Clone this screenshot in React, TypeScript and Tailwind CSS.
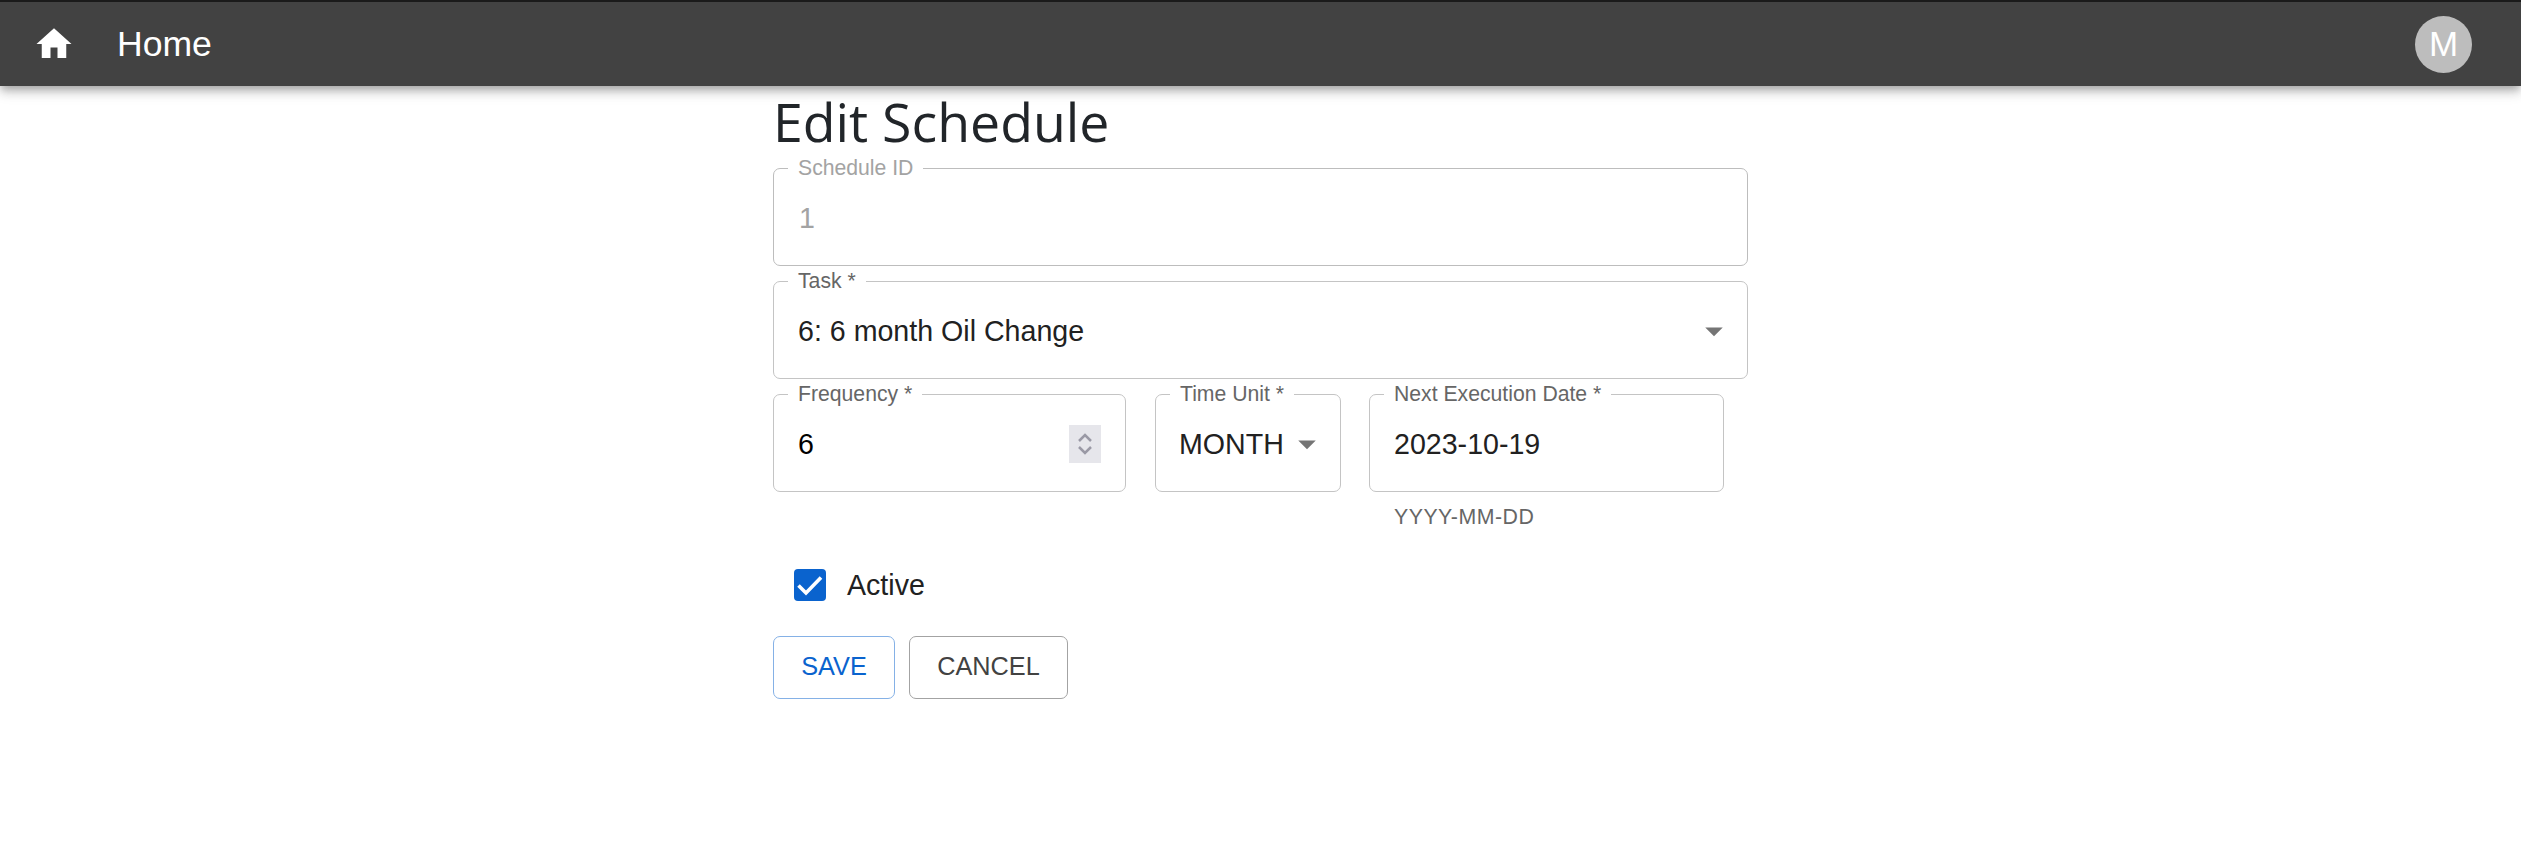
import React from "react";

function Notched({ label, className, disabled, children }: { label: string; className: string; disabled?: boolean; children: React.ReactNode }) {
  return (
    <div className={`relative h-[98px] rounded-[7px] border flex items-center pt-[2px] ${disabled ? "border-[#bdbdbd]" : "border-[#c4c4c4]"} ${className}`}>
      <span className={`absolute left-[14px] top-[-15px] h-[28px] leading-[28px] px-[10px] bg-white text-[21.2px] whitespace-nowrap ${disabled ? "text-[#a3a3a3]" : "text-[#666666]"}`}>
        {label}
      </span>
      {children}
    </div>
  );
}

function Arrow() {
  return (
    <svg viewBox="0 0 24 24" className="w-[42px] h-[42px] shrink-0" fill="#757575">
      <path d="M7 10l5 5 5-5z" />
    </svg>
  );
}

export default function App() {
  return (
    <div className="min-h-[850px] bg-white font-['Liberation_Sans',Arial,sans-serif] text-[#212121]">
      <header className="h-[86px] bg-[#424242] border-t-2 border-[#1a1a1a] flex items-center justify-between pl-[33px] pr-[49px] shadow-[0_4px_7px_-2px_rgba(0,0,0,0.2),0_7px_9px_0_rgba(0,0,0,0.14),0_2px_18px_0_rgba(0,0,0,0.12)] relative">
        <div className="flex items-center gap-[42px]">
          <svg viewBox="0 0 24 24" className="w-[42px] h-[42px]" fill="#ffffff">
            <path d="M10 20v-6h4v6h5v-8h3L12 3 2 12h3v8z" />
          </svg>
          <span className="text-[35.6px] leading-none text-white pt-[2px]">Home</span>
        </div>
        <div className="w-[57px] h-[57px] rounded-full bg-[#bdbdbd] flex items-center justify-center text-[35px] text-white">M</div>
      </header>

      <main className="w-[975px] ml-[773px]">
        <h2 className="font-['Open_Sans',sans-serif] text-[53.6px] leading-[67px] pt-[2px] mb-[13px] text-[#212529]">Edit Schedule</h2>

        <div className="flex flex-col gap-[15px]">
          <Notched label="Schedule ID" disabled className="w-full pl-[25px]">
            <span className="text-[28.6px] text-[#a3a3a3]">1</span>
          </Notched>

          <Notched label="Task *" className="w-full pl-[24px] pr-[12px] justify-between">
            <span className="text-[28.6px] text-[#212121]">6: 6 month Oil Change</span>
            <Arrow />
          </Notched>

          <div className="flex items-start">
            <Notched label="Frequency *" className="w-[353px] pl-[24px] pr-[24px] justify-between">
              <span className="text-[28.6px] text-black">6</span>
              <div className="w-[32px] h-[38px] bg-[#e6e6eb] flex items-center justify-center">
                <svg viewBox="0 0 16 24" className="w-[16px] h-[24px]" fill="none" stroke="#9a99a5" strokeWidth="2.5">
                  <path d="M2 9l6-6 6 6M2 15l6 6 6-6" />
                </svg>
              </div>
            </Notched>
            <Notched label="Time Unit *" className="w-[186px] ml-[29px] pl-[23px] pr-[4px]">
              <span className="text-[28.6px] text-[#212121]">MONTH</span>
              <span className="ml-[2px]"><Arrow /></span>
            </Notched>
            <div className="w-[355px] ml-[28px]">
              <Notched label="Next Execution Date *" className="w-full pl-[24px]">
                <span className="text-[28.6px] text-[#212121]">2023-10-19</span>
              </Notched>
              <p className="mt-[10px] pl-[25px] text-[21.3px] leading-[30px] text-[#666666] tracking-[0.5px]">YYYY-MM-DD</p>
            </div>
          </div>
        </div>

        <label className="flex items-center mt-[32px] pl-[21px]">
          <span className="w-[32px] h-[32px] rounded-[4px] bg-[#0a63ce] flex items-center justify-center">
            <svg viewBox="0 0 32 32" className="w-[32px] h-[32px]" fill="none" stroke="#ffffff" strokeWidth="3.6">
              <path d="M4.5 16.5l7.5 7.5 15-15.5" />
            </svg>
          </span>
          <span className="ml-[21px] text-[28.6px] text-[#212121]">Active</span>
        </label>

        <div className="flex gap-[14px] mt-[29px]">
          <button className="w-[122px] h-[63px] rounded-[7px] border border-[#85b1e6] text-[25.3px] text-[#0a63ce]">SAVE</button>
          <button className="w-[159px] h-[63px] rounded-[7px] border border-[#a3a3a3] text-[25.3px] text-[#424242]">CANCEL</button>
        </div>
      </main>
    </div>
  );
}
